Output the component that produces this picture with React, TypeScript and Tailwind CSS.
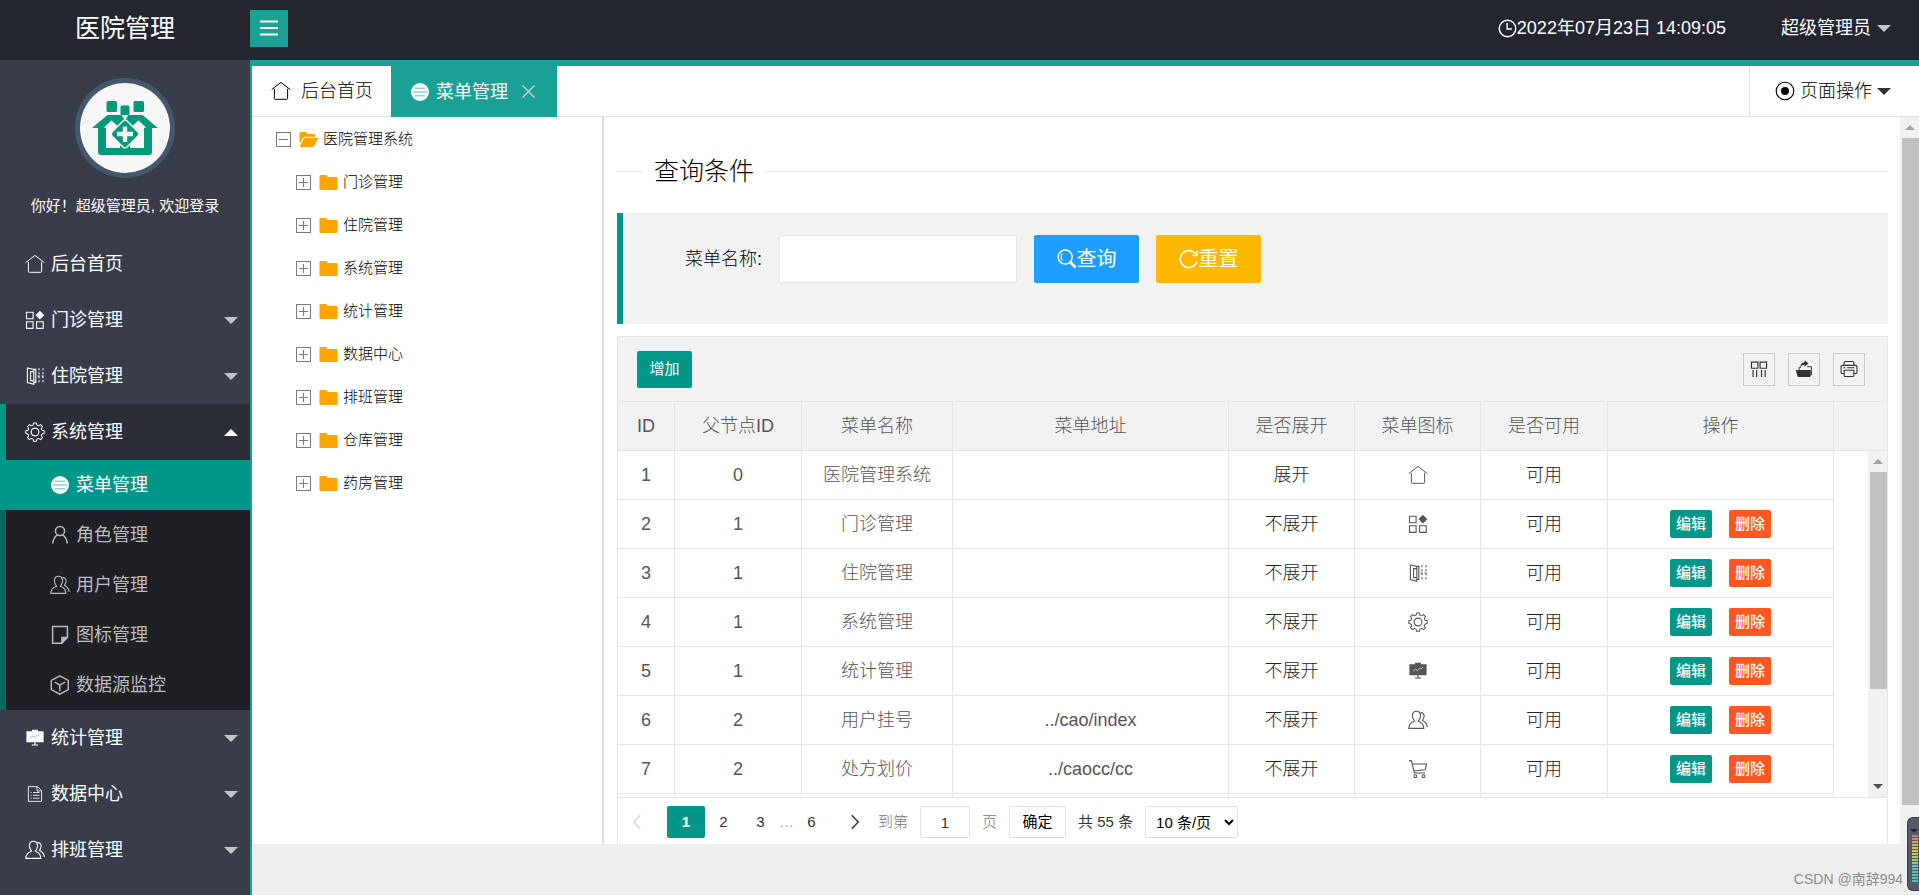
import type { ReactNode } from 'react';

type IconName =
  | 'home' | 'app' | 'template' | 'gear' | 'menu' | 'person' | 'people' | 'note' | 'cube'
  | 'chart' | 'doc' | 'cart' | 'search' | 'refresh' | 'clock' | 'radio' | 'close'
  | 'cols' | 'exportFile' | 'print' | 'folder' | 'folderOpen' | 'prev' | 'next';

const drawings: Record<IconName, ReactNode> = {
  home: <path d="M.7 8.6 10 1.4l9.3 7.2M3.4 7.8v9.7q0 .8.8.8h11.6q.8 0 .8-.8V7.8" strokeWidth="1" />,
  app: (
    <>
      <path d="M1.5 2.2h6.6v6.6H1.5zM1.5 11.8h6.6v6.6H1.5zM11.6 11.8h6.6v6.6h-6.6z" />
      <path d="m14.9.8 4.4 4.4-4.4 4.4-4.4-4.4z" fill="currentColor" stroke="none" />
    </>
  ),
  template: (
    <>
      <path d="M2.4 2v14.6l6.4 1.6V3.4zM5.6 5.6h3.2v9H5.6zM8.8 3.4h2v13h-2" />
      <path d="M14 2.2v16M18 2.2v16M12.6 10h6" strokeDasharray="2 2" />
    </>
  ),
  gear: (
    <>
      <path d="m8.4.9 3.2 0 .5 2.4 1.9.8 2.1-1.4 2.2 2.2-1.4 2.1.8 1.9 2.4.5v3.2l-2.4.5-.8 1.9 1.4 2.1-2.2 2.2-2.1-1.4-1.9.8-.5 2.4H8.400l-.5-2.400-1.900-.8-2.100 1.400-2.200-2.200 1.400-2.100-.8-1.900L-.1 12.600V9.400l2.400-.5.8-1.900-1.400-2.100 2.200-2.200L6 4.100l1.900-.8z" transform="translate(.9 .1) scale(.91)" strokeLinejoin="round" />
      <circle cx="10" cy="10" r="3.900" />
    </>
  ),
  menu: (
    <>
      <circle cx="10" cy="10" r="9" fill="currentColor" stroke="none" />
      <path d="M5 6.200h10M2.500 10h15M5 13.800h10" stroke="#1aa094" strokeWidth=".7" />
    </>
  ),
  person: (
    <>
      <circle cx="10" cy="6" r="4.600" strokeWidth="1.500" />
      <path d="M7.200 10Q3.300 12.600 2.800 18.500M12.800 10q3.900 2.600 4.400 8.500" strokeWidth="1.500" />
    </>
  ),
  people: (
    <path d="M6.600 11.200C2.600 5.500 4.600 1.300 8.400 1.300s6 4.200 2 9.900c3.800 1.300 5.400 3.500 5.400 7.200H.8c0-3.700 2-5.900 5.800-7.200zM12.600 2.400c3.700.4 4.800 3.600 2 8 2.600 1.200 4.400 3.800 4.700 6.600" />
  ),
  note: (
    <>
      <path d="M2.600 1.500h14.800v10.700l-5.600 6H2.600z" strokeWidth="1.500" />
      <path d="M17.400 12.200h-5.600v6z" fill="currentColor" />
    </>
  ),
  cube: <path d="m9.800.9 8.500 4.600v9l-8.500 4.700-8.500-4.700v-9zM4.500 7l5.300 3.200L15.200 7M9.800 10.200v6" strokeWidth="1.400" />,
  chart: (
    <>
      <path d="M7 1.800h6v1.400h5.600v11H1.400v-11H7zM9.400 14h1.200v2.600h-1.200zM6.800 16.400h6.400v1H6.800z" fill="currentColor" stroke="none" />
      <path d="m5 10 2.600-1.600 2.400 1 2-2.200 1.200.6L15 6" stroke="#b9bac0" strokeWidth="1" />
    </>
  ),
  doc: <path d="M3.400 2.600h9l4.200 4v10.800H3.400zM12 2.600V7h4.600M5.600 8.500h1M8 8.500h6.500M5.600 11.300h1M8 11.300h6.500M5.600 14.200h1M8 14.200h6.500" strokeWidth="1" opacity=".85" />,
  cart: (
    <>
      <path d="M1 1.600h2.400l3 12.400H17M4.400 5h14.200l-1.400 5.800L6 12" />
      <circle cx="7.400" cy="17.200" r="1.400" />
      <circle cx="15.600" cy="17.200" r="1.400" />
    </>
  ),
  search: (
    <>
      <circle cx="8.200" cy="8" r="7" strokeWidth="1.400" />
      <path d="M5.200 4.600q-2.200 3.400 0 6.800" />
      <path d="m13.200 13 5.400 5.400" strokeWidth="2.800" />
    </>
  ),
  refresh: (
    <path d="M17.900 12.500A8.500 8.500 0 1 1 16.600 5M18 1.600v5h-5" strokeWidth="1.500" />
  ),
  clock: (
    <>
      <circle cx="10" cy="10" r="8.700" strokeWidth="1.500" />
      <path d="M9.600 4.200v6.300h5" strokeWidth="1.500" />
    </>
  ),
  radio: (
    <>
      <circle cx="10" cy="10" r="8.800" />
      <circle cx="10" cy="10" r="4" fill="currentColor" stroke="none" />
    </>
  ),
  close: <path d="m3 3 14 14M17 3 3 17" strokeWidth="1.500" />,
  cols: <path d="M1.600 2.400h7.200v6.800H1.600zM11.200 2.400h7.200v6.800h-7.200zM3.400 11v8M7.400 11v8M12.800 11v8M16.800 11v8" strokeWidth="1.300" />,
  exportFile: (
    <>
      <path d="M.8 11h16.700v6.600q0 1.200-1.200 1.200H4q-1 0-1.300-1z" fill="currentColor" stroke="none" />
      <path d="M18.200 17V7.400h-4.600M4.600 11V8.200h2" />
      <path d="M10.600.4 15 4l-4.400 3.600V5.400Q7.400 5 6 8.400q0-5.400 4.600-5.800z" fill="currentColor" stroke="none" />
    </>
  ),
  print: (
    <path d="M4.600 6V2.800q0-1.200 1.200-1.200h8.400q1.200 0 1.200 1.200V6M4.600 15H2.400q-1.200 0-1.200-1.200V7.200Q1.200 6 2.400 6h15.200q1.200 0 1.200 1.200v6.600q0 1.200-1.200 1.200h-2.200M4.600 11.400h10.800v5.800q0 1.200-1.200 1.200H5.800q-1.200 0-1.200-1.200zM3.600 8.600h2M8 8.600h8" strokeWidth="1.200" />
  ),
  folder: (
    <path d="M.5 3.200Q.5 2 1.600 2h5.800q.8 0 1.100.8l.5 1.400h9.400q1.100 0 1.100 1.100v11.600q0 1.100-1.100 1.100H1.600q-1.100 0-1.100-1.100z" fill="#ffa500" stroke="none" />
  ),
  folderOpen: (
    <>
      <path d="M.5 3.400Q.5 2 2 2h4.800q.9 0 1.200.9l.5 1.300h7.300q1.400 0 1.400 1.400V7H6.400Q5 7 4.200 8.200L.5 14.600z" fill="#ffa500" stroke="none" />
      <path d="M6.600 8.200h13q.8 0 .4.900l-3.900 7.600q-.6 1.100-1.900 1.100H1.400q-.8 0-.4-.8l4.200-8Q5.600 8.200 6.600 8.200z" fill="#ffa500" stroke="none" />
    </>
  ),
  prev: <path d="M14 1.500 6 10l8 8.500" strokeWidth="1.800" />,
  next: <path d="m6 1.500 8 8.500-8 8.500" strokeWidth="1.800" />,
};

function Icon({ name, className }: { name: IconName; className: string }) {
  return (
    <svg viewBox="0 0 20 20" fill="none" stroke="currentColor" strokeWidth="1.100" aria-hidden="true" className={`shrink-0 ${className}`}>
      {drawings[name]}
    </svg>
  );
}

function Caret({ up, className }: { up?: boolean; className: string }) {
  return (
    <svg viewBox="0 0 14 7" aria-hidden="true" fill="currentColor" className={`shrink-0 ${className}`}>
      <path d={up ? 'M0 7 7 0l7 7z' : 'M0 0h14L7 7z'} />
    </svg>
  );
}

function HospitalLogo() {
  return (
    <svg viewBox="0 0 90 90" className="size-full" aria-label="医院管理" role="img">
      <circle cx="45" cy="45" r="45" fill="#f6f6f6" />
      <g fill="#049a79">
        <rect x="26.500" y="18" width="10.500" height="11" rx="1.500" />
        <rect x="40.500" y="22.500" width="9" height="9.500" rx="1.500" />
        <rect x="53.500" y="18" width="10.500" height="11" rx="1.500" />
        <path d="M12 45 27.500 32h14L45 37.500 48.500 32h14L78 45h-6v24q0 3-3 3H21q-3 0-3-3V45z" />
      </g>
      <path d="M24 44.500 31.500 37.500l9 8V65H26V45zM66 44.500l-7.500-7-9 8V65H64V45z" fill="#f6f6f6" />
      <path d="M40 62h10v3.500H40z" fill="#049a79" />
      <path d="M45 40.500 55.500 51 45 61.500 34.500 51z" fill="#f6f6f6" stroke="#f6f6f6" strokeWidth="8" strokeLinejoin="round" />
      <path d="M45 40.500 55.500 51 45 61.500 34.500 51z" fill="#049a79" stroke="#049a79" strokeWidth="5" strokeLinejoin="round" />
      <path d="M42.800 43.500h4.400v5.300h5.800v4.400h-5.800v5.800h-4.400v-5.800H37v-4.400h5.800z" fill="#f6f6f6" />
    </svg>
  );
}

const topMenu: { label: string; icon: IconName; leaf?: boolean }[] = [
  { label: '后台首页', icon: 'home', leaf: true },
  { label: '门诊管理', icon: 'app' },
  { label: '住院管理', icon: 'template' },
];
const bottomMenu: { label: string; icon: IconName; leaf?: boolean }[] = [
  { label: '统计管理', icon: 'chart' },
  { label: '数据中心', icon: 'doc' },
  { label: '排班管理', icon: 'people' },
];
const subMenu: { label: string; icon: IconName }[] = [
  { label: '菜单管理', icon: 'menu' },
  { label: '角色管理', icon: 'person' },
  { label: '用户管理', icon: 'people' },
  { label: '图标管理', icon: 'note' },
  { label: '数据源监控', icon: 'cube' },
];
const tree = ['门诊管理', '住院管理', '系统管理', '统计管理', '数据中心', '排班管理', '仓库管理', '药房管理'];

const rows: { id: number; parent: number; name: string; url: string; open: string; icon: IconName }[] = [
  { id: 1, parent: 0, name: '医院管理系统', url: '', open: '展开', icon: 'home' },
  { id: 2, parent: 1, name: '门诊管理', url: '', open: '不展开', icon: 'app' },
  { id: 3, parent: 1, name: '住院管理', url: '', open: '不展开', icon: 'template' },
  { id: 4, parent: 1, name: '系统管理', url: '', open: '不展开', icon: 'gear' },
  { id: 5, parent: 1, name: '统计管理', url: '', open: '不展开', icon: 'chart' },
  { id: 6, parent: 2, name: '用户挂号', url: '../cao/index', open: '不展开', icon: 'people' },
  { id: 7, parent: 2, name: '处方划价', url: '../caocc/cc', open: '不展开', icon: 'cart' },
];
const heads = ['ID', '父节点ID', '菜单名称', '菜单地址', '是否展开', '菜单图标', '是否可用', '操作'];

function MenuItem({ label, icon, leaf }: { label: string; icon: IconName; leaf?: boolean }) {
  return (
    <a href="#" className="flex h-14 items-center pl-[25px] pr-3 text-lg text-white">
      <Icon name={icon} className="size-5" />
      <span className="ml-1.5 flex-1">{label}</span>
      {!leaf && <Caret className="h-[7px] w-3.5 text-[#c4c5c9]" />}
    </a>
  );
}

function Sidebar() {
  return (
    <aside className="w-[252px] shrink-0 overflow-hidden border-r-2 border-[#1aa094] bg-[#393d49]">
      <div className="flex flex-col items-center pb-[18px] pt-[18px]">
        <div className="size-[100px] rounded-full border-5 border-[#44576b]">
          <HospitalLogo />
        </div>
        <p className="mt-4 text-[15px] leading-6 text-white">你好！超级管理员, 欢迎登录</p>
      </div>
      <nav>
        {topMenu.map((m) => <MenuItem key={m.label} {...m} />)}
        <a href="#" className="flex h-14 items-center border-l-6 border-[#009688] bg-[#2b2e37] pl-[19px] pr-3 text-lg text-white">
          <Icon name="gear" className="size-5" />
          <span className="ml-1.5 flex-1">系统管理</span>
          <Caret up className="h-[7px] w-3.5 text-white" />
        </a>
        <div>
          {subMenu.map((m, i) => (
            <a
              key={m.label}
              href="#"
              className={`flex h-[50px] items-center border-l-6 pl-11 text-lg ${
                i === 0 ? 'border-[#009688] bg-[#009688] text-white' : 'border-[#006b61] bg-[#1f2025] text-[#bcbcbe]'
              }`}
            >
              <Icon name={m.icon} className="size-5" />
              <span className="ml-1.5">{m.label}</span>
            </a>
          ))}
        </div>
        {bottomMenu.map((m) => <MenuItem key={m.label} {...m} />)}
      </nav>
    </aside>
  );
}

function TreeToggle({ open }: { open?: boolean }) {
  return (
    <button type="button" aria-label={open ? '收起' : '展开'} className="size-[15px] shrink-0 border border-[#7a7a7a] text-[#7a7a7a]">
      <svg viewBox="0 0 13 13" className="size-full" stroke="currentColor" aria-hidden="true">
        <path d={open ? 'M2 6.500h9' : 'M2 6.500h9M6.500 2v9'} />
      </svg>
    </button>
  );
}

function Tree() {
  return (
    <div className="w-[352px] shrink-0 border-r-2 border-[#dcdcdc] pt-px text-[15px] font-light text-black">
      <div className="flex h-[43px] items-center pl-6">
        <TreeToggle open />
        <Icon name="folderOpen" className="ml-2 size-[19px]" />
        <span className="ml-[5px]">医院管理系统</span>
      </div>
      {tree.map((t) => (
        <div key={t} className="flex h-[43px] items-center pl-11">
          <TreeToggle />
          <Icon name="folder" className="ml-2 size-[19px]" />
          <span className="ml-[5px]">{t}</span>
        </div>
      ))}
    </div>
  );
}

function DataTable() {
  const cell = 'h-[49px] border-b border-r border-[#e6e6e6] p-0 text-center font-light';
  return (
    <div className="relative min-h-0 flex-1 overflow-hidden">
      <table className="w-full table-fixed border-separate border-spacing-0 text-lg text-[#555]">
        <colgroup>
          <col className="w-[57px]" />
          <col className="w-[127px]" />
          <col className="w-[151px]" />
          <col />
          <col className="w-[126px]" />
          <col className="w-[126px]" />
          <col className="w-[127px]" />
          <col className="w-[226px]" />
          <col className="w-[53px]" />
        </colgroup>
        <thead className="bg-[#f2f2f2]">
          <tr>
            {heads.map((h) => <th key={h} scope="col" className={cell}>{h}</th>)}
            <td className="border-b border-[#e6e6e6]" />
          </tr>
        </thead>
        <tbody>
          {rows.map((r) => (
            <tr key={r.id}>
              <td className={cell}>{r.id}</td>
              <td className={cell}>{r.parent}</td>
              <td className={cell}>{r.name}</td>
              <td className={cell}>{r.url}</td>
              <td className={`${cell} text-[#222]`}>{r.open}</td>
              <td className={cell}><Icon name={r.icon} className="mx-auto size-5" /></td>
              <td className={`${cell} text-[#222]`}>可用</td>
              <td className={cell}>
                {r.id > 1 && (
                  <div className="flex items-center justify-center gap-[17px] text-[15px] text-white">
                    <button type="button" className="h-7 rounded-xs bg-[#009688] px-1.5 font-medium">编辑</button>
                    <button type="button" className="h-7 rounded-xs bg-[#ff5722] px-1.5 font-medium">删除</button>
                  </div>
                )}
              </td>
              <td />
            </tr>
          ))}
          <tr aria-hidden="true">
            {heads.map((h) => <td key={h} className={cell} />)}
            <td />
          </tr>
        </tbody>
      </table>
      <div className="absolute bottom-0 right-0 top-[49px] flex w-[19px] flex-col items-center bg-[#f1f1f1]">
        <div className="flex h-[21px] shrink-0 items-center"><Caret up className="h-[5px] w-2.5 text-[#a3a3a3]" /></div>
        <div className="ml-0.5 h-[217px] w-[17px] shrink-0 bg-[#c1c1c1]" />
        <div className="mt-auto flex h-[21px] items-center"><Caret className="h-[5px] w-2.5 text-[#505050]" /></div>
      </div>
    </div>
  );
}

function Pager() {
  const page = 'h-8 w-[37px] text-center';
  return (
    <div className="flex h-[47px] shrink-0 items-center border-t border-[#e6e6e6] pl-[11px] pt-0.5 text-[15px] text-[#333]">
      <button type="button" aria-label="上一页" className="flex w-[30px] text-[#d2d2d2]"><Icon name="prev" className="size-4" /></button>
      <button type="button" className="ml-2 h-8 w-[38px] rounded-xs bg-[#009688] text-center font-bold text-white">1</button>
      <button type="button" className={page}>2</button>
      <button type="button" className={page}>3</button>
      <span className="w-3.5 text-center text-[#999]">…</span>
      <button type="button" className={page}>6</button>
      <button type="button" aria-label="下一页" className="ml-1.5 flex w-[38px] justify-center"><Icon name="next" className="size-4" /></button>
      <label htmlFor="page-no" className="ml-1 font-light text-[#777]">到第</label>
      <input id="page-no" defaultValue="1" className="ml-3 h-8 w-[50px] rounded-xs border border-[#e2e2e2] bg-white text-center" />
      <span className="ml-3 font-light text-[#777]">页</span>
      <button type="button" className="ml-3 h-8 w-[57px] rounded-xs border border-[#e2e2e2] text-black">确定</button>
      <span className="ml-3">共 55 条</span>
      <select aria-label="每页条数" className="ml-3 h-8 w-[93px] rounded-xs border border-[#e2e2e2] bg-white pl-1.5 text-black">
        <option>10 条/页</option>
      </select>
    </div>
  );
}

function MainPane() {
  const tool = 'flex h-[33px] w-8 items-center justify-center border border-[#ccc] text-[#333]';
  return (
    <main className="flex min-w-0 flex-1 flex-col pl-[13px] pr-3 pt-9">
      <div className="flex h-9 shrink-0 items-center">
        <span className="h-px w-[25px] bg-[#e6e6e6]" />
        <h1 className="px-3 text-[25px] font-light leading-9 text-black">查询条件</h1>
        <span className="h-px flex-1 bg-[#e6e6e6]" />
      </div>
      <form className="mt-6 h-[111px] shrink-0 border-l-6 border-[#009688] bg-[#f2f2f2] pl-[62px] pt-[22px]" onSubmit={(e) => e.preventDefault()}>
        <div className="flex items-center">
          <label htmlFor="menu-name" className="text-lg font-light text-black">菜单名称:</label>
          <input id="menu-name" className="ml-[17px] h-12 w-[238px] rounded-xs border border-[#e6e6e6] bg-white px-3 text-lg" />
          <button type="submit" className="ml-[17px] flex h-12 w-[105px] items-center justify-center rounded-xs bg-[#1e9fff] text-xl text-white">
            <Icon name="search" className="size-5" />查询
          </button>
          <button type="reset" className="ml-[17px] flex h-12 w-[105px] items-center justify-center rounded-xs bg-[#ffb800] text-xl text-white">
            <Icon name="refresh" className="size-5" />重置
          </button>
        </div>
      </form>
      <section className="mt-3 flex min-h-0 flex-1 flex-col border border-b-0 border-[#e6e6e6]">
        <div className="flex h-[65px] shrink-0 items-center border-b border-[#e6e6e6] bg-[#f2f2f2] pl-[19px] pr-[22px]">
          <button type="button" className="h-[37px] w-[55px] rounded-xs bg-[#009688] text-[15px] text-white">增加</button>
          <div className="ml-auto flex gap-[13px]">
            <button type="button" aria-label="筛选列" className={tool}><Icon name="cols" className="size-[18px]" /></button>
            <button type="button" aria-label="导出" className={tool}><Icon name="exportFile" className="size-[18px]" /></button>
            <button type="button" aria-label="打印" className={tool}><Icon name="print" className="size-[18px]" /></button>
          </div>
        </div>
        <DataTable />
        <Pager />
      </section>
    </main>
  );
}

const meterBars = [
  'bg-[#d9775f]', 'bg-[#d98a5a]', 'bg-[#d99d55]', 'bg-[#d9b050]', 'bg-[#d6c24e]', 'bg-[#ccc856]',
  'bg-[#bccb5e]', 'bg-[#a9cc68]', 'bg-[#94cc74]', 'bg-[#80cb80]', 'bg-[#6ec98c]', 'bg-[#60c898]',
  'bg-[#56c7a2]', 'bg-[#50c6aa]', 'bg-[#4cc5ae]', 'bg-[#4ac4b2]',
];

export default function App() {
  return (
    <div className="relative flex h-screen min-h-[760px] flex-col overflow-hidden bg-white font-['Liberation_Sans','Noto_Sans_CJK_SC',sans-serif] leading-normal">
      <header className="flex h-[60px] shrink-0 items-center bg-[#23262e] text-lg text-white">
        <div className="-mt-1 w-[250px] text-center text-[25px]">医院管理</div>
        <button type="button" aria-label="折叠菜单" className="-mt-1 flex h-[37px] w-[38px] items-center justify-center bg-[#1aa094]">
          <svg viewBox="0 0 18 16" className="h-4 w-[18px]" stroke="white" strokeWidth="2" aria-hidden="true">
            <path d="M0 1.500h18M0 8h18M0 14.500h18" />
          </svg>
        </button>
        <div className="-mt-1 ml-auto flex items-center pr-7">
          <Icon name="clock" className="size-[19px]" />
          <span>2022年07月23日 14:09:05</span>
          <a href="#" className="ml-[55px] flex items-center">
            超级管理员<Caret className="ml-1.5 h-[7px] w-3.5 text-[#c4c5c9]" />
          </a>
        </div>
      </header>

      <div className="flex min-h-0 flex-1">
        <Sidebar />
        <div className="flex min-w-0 flex-1 flex-col">
          <div className="flex h-[57px] shrink-0 border-b border-t-6 border-b-[#e2e2e2] border-t-[#1aa094] text-lg text-black">
            <a href="#" className="flex w-[139px] items-center pl-[19px] font-light">
              <Icon name="home" className="size-5" />
              <span className="ml-2.5">后台首页</span>
            </a>
            <a href="#" className="-mb-px flex w-[166px] items-center bg-[#1aa094] pl-[19px] text-white">
              <Icon name="menu" className="size-5" />
              <span className="ml-1.5">菜单管理</span>
              <Icon name="close" className="ml-3 size-[17px] text-[#c8d6d4]" />
            </a>
            <a href="#" className="ml-auto flex w-[170px] items-center border-l border-[#e2e2e2] pl-[25px] font-light">
              <Icon name="radio" className="size-5" />
              <span className="ml-[5px]">页面操作</span>
              <Caret className="ml-[5px] h-[7px] w-3.5 text-[#333]" />
            </a>
          </div>
          <div className="flex min-h-0 flex-1 overflow-hidden">
            <Tree />
            <MainPane />
            <div className="flex w-[19px] shrink-0 flex-col items-center bg-[#f1f1f1]">
              <div className="flex h-[21px] shrink-0 items-center"><Caret up className="h-[5px] w-2.5 text-[#a3a3a3]" /></div>
              <div className="mb-[39px] ml-0.5 w-[17px] flex-1 bg-[#c1c1c1]" />
            </div>
          </div>
          <footer className="flex h-[51px] shrink-0 items-end justify-end bg-[#eee] pb-1.5 pr-4 text-sm text-[#8c8c8c]">
            CSDN @南辞994
          </footer>
        </div>
      </div>

      <div className="absolute bottom-1 right-0 flex h-[74px] w-3 flex-col items-end justify-end gap-px rounded-l-md border border-r-0 border-[#3a3c48] bg-[#565a6b] pb-2 pr-px">
        <Caret className="mb-px h-1 w-2 text-[#23262e]" />
        {meterBars.map((c) => <span key={c} className={`h-0.5 w-1.5 ${c}`} />)}
      </div>
    </div>
  );
}
